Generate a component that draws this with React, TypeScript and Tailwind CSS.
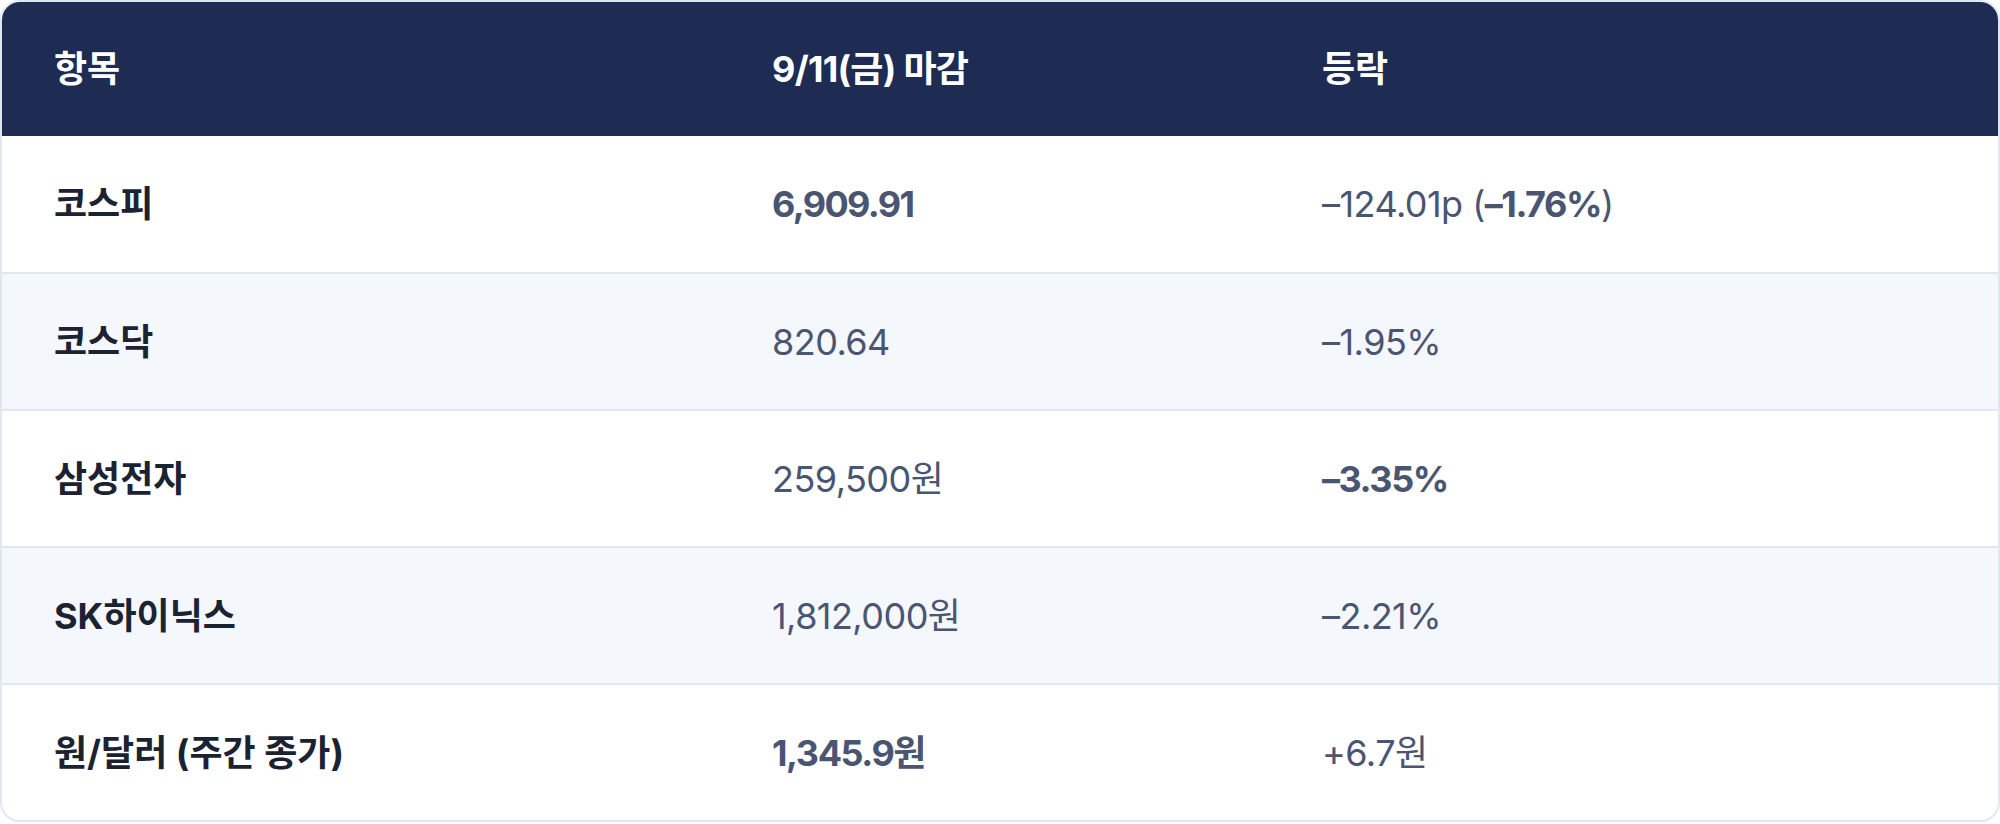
import React from "react";

type Row = {
  name: string;
  close: React.ReactNode;
  change: React.ReactNode;
};

const rows: Row[] = [
  {
    name: "코스피",
    close: <span className="font-bold tracking-[-0.045em]">6,909.91</span>,
    change: (
      <>
        –124.01p (<span className="font-bold tracking-[-0.04em]">–1.76%</span>)
      </>
    ),
  },
  { name: "코스닥", close: "820.64", change: "–1.95%" },
  {
    name: "삼성전자",
    close: "259,500원",
    change: <span className="font-bold tracking-[-0.04em]">–3.35%</span>,
  },
  { name: "SK하이닉스", close: "1,812,000원", change: "–2.21%" },
  {
    name: "원/달러 (주간 종가)",
    close: <span className="font-bold tracking-[-0.04em]">1,345.9원</span>,
    change: "+6.7원",
  },
];

const App = () => {
  return (
    <div
      className="w-[2000px] h-[824px] bg-white"
      style={{ fontFamily: 'Inter, "Noto Sans CJK KR", sans-serif' }}
    >
      <div className="w-full border-2 border-[#e1e7f1] rounded-[20px] overflow-hidden">
        {/* Header */}
        <div className="grid grid-cols-[718px_550px_1fr] h-[134px] items-center bg-[#1e2b53] text-white text-[36px] font-bold">
          <div className="pl-[52px]">항목</div>
          <div className="pl-[52px] tracking-[-0.02em]">9/11(금) 마감</div>
          <div className="pl-[52px]">등락</div>
        </div>

        {/* Body */}
        {rows.map((row, i) => (
          <div
            key={row.name}
            className={
              i === 0
                ? "grid grid-cols-[718px_550px_1fr] h-[136px] items-center bg-white text-[36px]"
                : i % 2 === 1
                  ? "grid grid-cols-[718px_550px_1fr] h-[137px] items-center border-t-2 border-[#e1e7f1] bg-[#f4f7fc] text-[36px]"
                  : "grid grid-cols-[718px_550px_1fr] h-[137px] items-center border-t-2 border-[#e1e7f1] bg-white text-[36px]"
            }
          >
            <div className="pl-[52px] font-bold text-[#1b2333]">{row.name}</div>
            <div className="pl-[52px] text-[#4a5572] tracking-[-0.015em]">{row.close}</div>
            <div className="pl-[52px] text-[#4a5572] tracking-[-0.015em]">{row.change}</div>
          </div>
        ))}
      </div>
    </div>
  );
};

export default App;
